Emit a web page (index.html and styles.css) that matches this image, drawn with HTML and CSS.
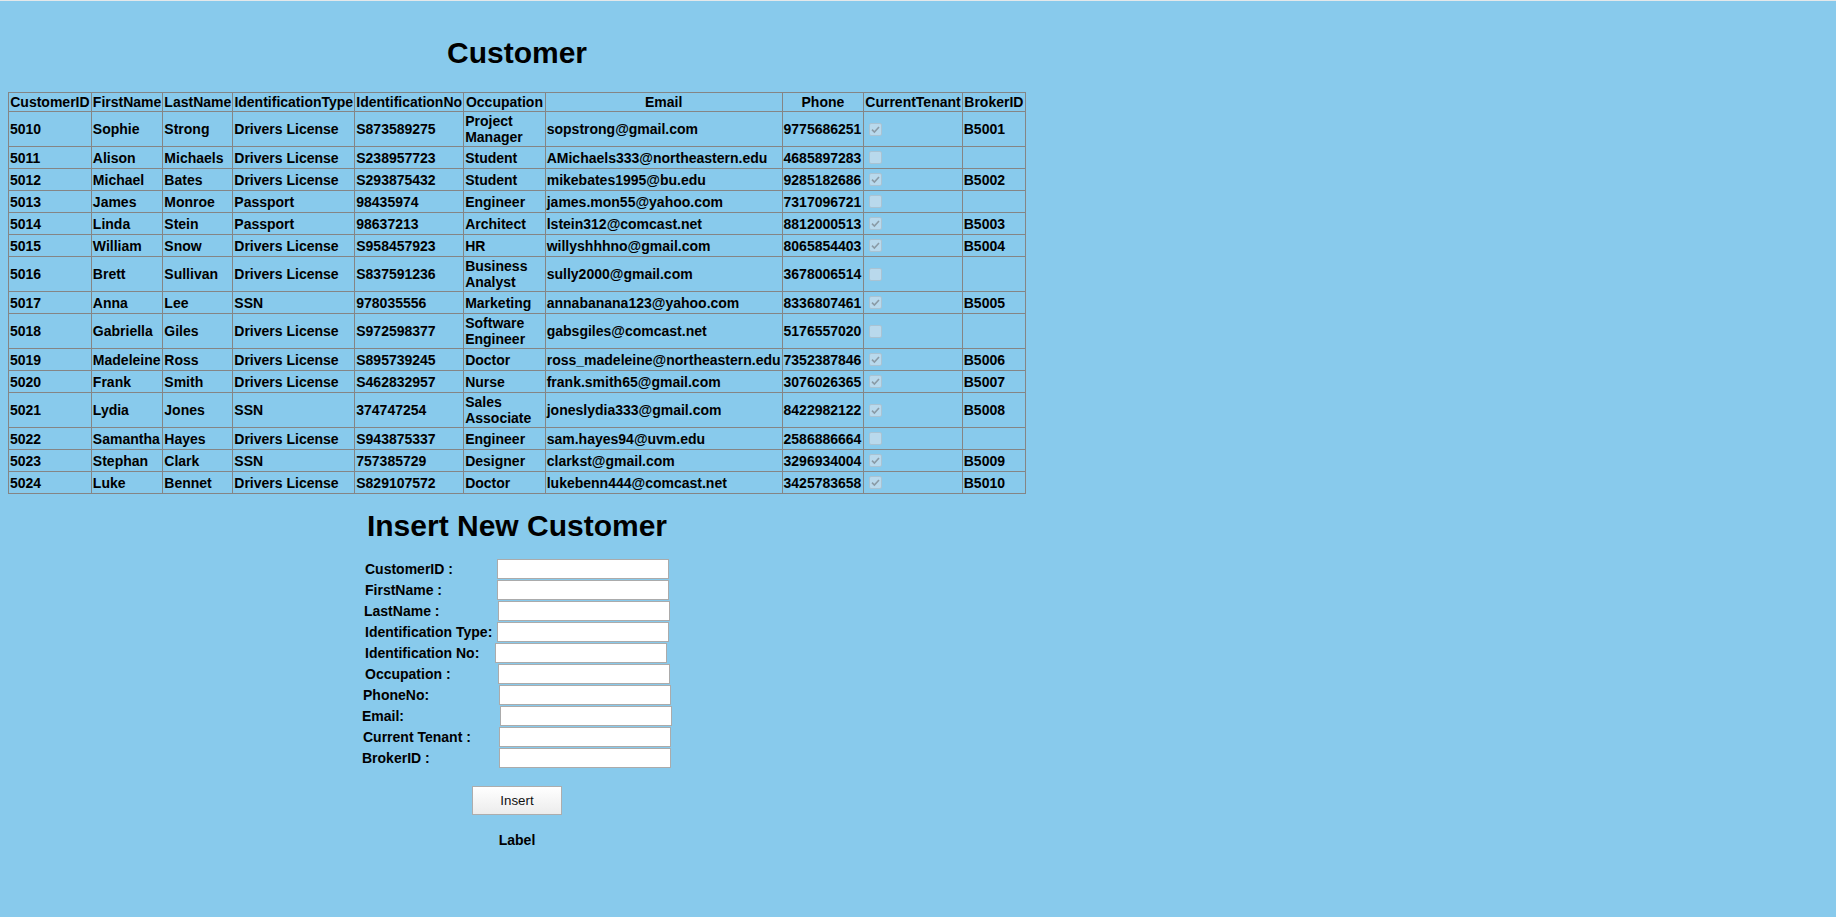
FILE: index.html
```html
<!DOCTYPE html>
<html>
<head>
<meta charset="utf-8">
<title>Customer</title>
<link rel="stylesheet" href="styles.css">
</head>
<body>
<div class="page">
  <h2 class="title">Customer</h2>
  <table class="grid">
    <thead>
      <tr><th class="c-id">CustomerID</th><th class="c-first">FirstName</th><th class="c-last">LastName</th><th class="c-idtype">IdentificationType</th><th class="c-idno">IdentificationNo</th><th class="c-occ">Occupation</th><th class="c-email">Email</th><th class="c-phone">Phone</th><th class="c-tenant">CurrentTenant</th><th class="c-broker">BrokerID</th></tr>
    </thead>
    <tbody>
      <tr><td>5010</td><td>Sophie</td><td>Strong</td><td>Drivers License</td><td>S873589275</td><td>Project Manager</td><td>sopstrong@gmail.com</td><td>9775686251</td><td><span class="cb"><svg viewBox="0 0 11 11" class="ck"><path d="M2 5.6 L4.4 8 L9 3"/></svg></span></td><td>B5001</td></tr>
      <tr><td>5011</td><td>Alison</td><td>Michaels</td><td>Drivers License</td><td>S238957723</td><td>Student</td><td>AMichaels333@northeastern.edu</td><td>4685897283</td><td><span class="cb"></span></td><td></td></tr>
      <tr><td>5012</td><td>Michael</td><td>Bates</td><td>Drivers License</td><td>S293875432</td><td>Student</td><td>mikebates1995@bu.edu</td><td>9285182686</td><td><span class="cb"><svg viewBox="0 0 11 11" class="ck"><path d="M2 5.6 L4.4 8 L9 3"/></svg></span></td><td>B5002</td></tr>
      <tr><td>5013</td><td>James</td><td>Monroe</td><td>Passport</td><td>98435974</td><td>Engineer</td><td>james.mon55@yahoo.com</td><td>7317096721</td><td><span class="cb"></span></td><td></td></tr>
      <tr><td>5014</td><td>Linda</td><td>Stein</td><td>Passport</td><td>98637213</td><td>Architect</td><td>lstein312@comcast.net</td><td>8812000513</td><td><span class="cb"><svg viewBox="0 0 11 11" class="ck"><path d="M2 5.6 L4.4 8 L9 3"/></svg></span></td><td>B5003</td></tr>
      <tr><td>5015</td><td>William</td><td>Snow</td><td>Drivers License</td><td>S958457923</td><td>HR</td><td>willyshhhno@gmail.com</td><td>8065854403</td><td><span class="cb"><svg viewBox="0 0 11 11" class="ck"><path d="M2 5.6 L4.4 8 L9 3"/></svg></span></td><td>B5004</td></tr>
      <tr><td>5016</td><td>Brett</td><td>Sullivan</td><td>Drivers License</td><td>S837591236</td><td>Business Analyst</td><td>sully2000@gmail.com</td><td>3678006514</td><td><span class="cb"></span></td><td></td></tr>
      <tr><td>5017</td><td>Anna</td><td>Lee</td><td>SSN</td><td>978035556</td><td>Marketing</td><td>annabanana123@yahoo.com</td><td>8336807461</td><td><span class="cb"><svg viewBox="0 0 11 11" class="ck"><path d="M2 5.6 L4.4 8 L9 3"/></svg></span></td><td>B5005</td></tr>
      <tr><td>5018</td><td>Gabriella</td><td>Giles</td><td>Drivers License</td><td>S972598377</td><td>Software Engineer</td><td>gabsgiles@comcast.net</td><td>5176557020</td><td><span class="cb"></span></td><td></td></tr>
      <tr><td>5019</td><td>Madeleine</td><td>Ross</td><td>Drivers License</td><td>S895739245</td><td>Doctor</td><td>ross_madeleine@northeastern.edu</td><td>7352387846</td><td><span class="cb"><svg viewBox="0 0 11 11" class="ck"><path d="M2 5.6 L4.4 8 L9 3"/></svg></span></td><td>B5006</td></tr>
      <tr><td>5020</td><td>Frank</td><td>Smith</td><td>Drivers License</td><td>S462832957</td><td>Nurse</td><td>frank.smith65@gmail.com</td><td>3076026365</td><td><span class="cb"><svg viewBox="0 0 11 11" class="ck"><path d="M2 5.6 L4.4 8 L9 3"/></svg></span></td><td>B5007</td></tr>
      <tr><td>5021</td><td>Lydia</td><td>Jones</td><td>SSN</td><td>374747254</td><td>Sales Associate</td><td>joneslydia333@gmail.com</td><td>8422982122</td><td><span class="cb"><svg viewBox="0 0 11 11" class="ck"><path d="M2 5.6 L4.4 8 L9 3"/></svg></span></td><td>B5008</td></tr>
      <tr><td>5022</td><td>Samantha</td><td>Hayes</td><td>Drivers License</td><td>S943875337</td><td>Engineer</td><td>sam.hayes94@uvm.edu</td><td>2586886664</td><td><span class="cb"></span></td><td></td></tr>
      <tr><td>5023</td><td>Stephan</td><td>Clark</td><td>SSN</td><td>757385729</td><td>Designer</td><td>clarkst@gmail.com</td><td>3296934004</td><td><span class="cb"><svg viewBox="0 0 11 11" class="ck"><path d="M2 5.6 L4.4 8 L9 3"/></svg></span></td><td>B5009</td></tr>
      <tr><td>5024</td><td>Luke</td><td>Bennet</td><td>Drivers License</td><td>S829107572</td><td>Doctor</td><td>lukebenn444@comcast.net</td><td>3425783658</td><td><span class="cb"><svg viewBox="0 0 11 11" class="ck"><path d="M2 5.6 L4.4 8 L9 3"/></svg></span></td><td>B5010</td></tr>
    </tbody>
  </table>

  <h2 class="subtitle">Insert New Customer</h2>
  <form class="form">
    <label class="lbl p4">CustomerID :</label><input class="box s2" type="text">
    <label class="lbl p4">FirstName :</label><input class="box s2" type="text">
    <label class="lbl p3">LastName :</label><input class="box s3" type="text">
    <label class="lbl p4">Identification Type:</label><input class="box s2" type="text">
    <label class="lbl p4">Identification No:</label><input class="box s0" type="text">
    <label class="lbl p4">Occupation :</label><input class="box s3" type="text">
    <label class="lbl p2">PhoneNo:</label><input class="box s4" type="text">
    <label class="lbl p1">Email:</label><input class="box s5" type="text">
    <label class="lbl p2">Current Tenant :</label><input class="box s4" type="text">
    <label class="lbl p1">BrokerID :</label><input class="box s4" type="text">
  </form>
  <div class="actions"><button class="btn" type="button">Insert</button></div>
  <div class="result">Label</div>
</div>
</body>
</html>
```

FILE: styles.css
```css
html {
  border-top: 1px solid #e4e8ea;
  background: #88caec;
}
body {
  margin: 8px;
  font-family: "Liberation Sans", Arial, sans-serif;
  color: #000;
}
.page {
  width: fit-content;
}
.title,
.subtitle {
  font-size: 30px;
  font-weight: bold;
  line-height: 35px;
  text-align: center;
  margin: 0;
}
.title {
  margin-top: 26px;
  margin-bottom: 22px;
}
.subtitle {
  margin-top: 14px;
}
.grid {
  width: 1018px;
  border-collapse: collapse;
  border: 1px solid #858585;
  font-size: 14px;
  font-weight: bold;
}
.grid th,
.grid td {
  border: 1px solid #858585;
  padding: 1px;
  line-height: normal;
}
.grid th {
  text-align: center;
  white-space: nowrap;
}
.grid td {
  text-align: left;
  vertical-align: middle;
}
.c-id { width: 80px; }
.c-first { width: 68.5px; }
.c-last { width: 67px; }
.c-idtype { width: 119px; }
.c-idno { width: 106px; }
.c-occ { width: 79px; }
.c-email { width: 233.5px; }
.c-phone { width: 79px; }
.c-tenant { width: 95.5px; }
.c-broker { width: 60.5px; }
.cb {
  display: block;
  box-sizing: border-box;
  width: 13px;
  height: 13px;
  margin: 3px 3px 3px 4px;
  border: 1px solid #a9c3d3;
  border-radius: 2px;
  background: #b9d9ec;
}
.ck {
  display: block;
  width: 11px;
  height: 11px;
  fill: none;
  stroke: #8a9ba6;
  stroke-width: 1.6;
}
.form {
  display: grid;
  grid-template-columns: 134px 178px;
  row-gap: 1px;
  width: 312px;
  margin: 16px auto 0;
  align-items: center;
  font-size: 14px;
  font-weight: bold;
}
.lbl {
  white-space: nowrap;
  line-height: 16px;
}
.p1 { padding-left: 1px; }
.p2 { padding-left: 2px; }
.p3 { padding-left: 3px; }
.p4 { padding-left: 4px; }
.box {
  box-sizing: border-box;
  width: 172px;
  height: 20px;
  margin: 0;
  padding: 1px 2px;
  border: 1px solid #ababab;
  background: #fff;
  font-family: "Liberation Sans", Arial, sans-serif;
  font-size: 13px;
}
.s0 { margin-left: 0; }
.s2 { margin-left: 2px; }
.s3 { margin-left: 3px; }
.s4 { margin-left: 4px; }
.s5 { margin-left: 5px; }
.actions {
  display: flex;
  justify-content: center;
  margin-top: 18px;
}
.btn {
  box-sizing: border-box;
  width: 90px;
  height: 29px;
  padding: 0;
  border: 1px solid #adadad;
  border-radius: 0;
  background: linear-gradient(#ffffff, #ececec);
  font-family: "Liberation Sans", Arial, sans-serif;
  font-size: 13.33px;
  color: #111;
}
.result {
  margin-top: 17px;
  text-align: center;
  font-size: 14px;
  font-weight: bold;
  line-height: 16px;
}
```
